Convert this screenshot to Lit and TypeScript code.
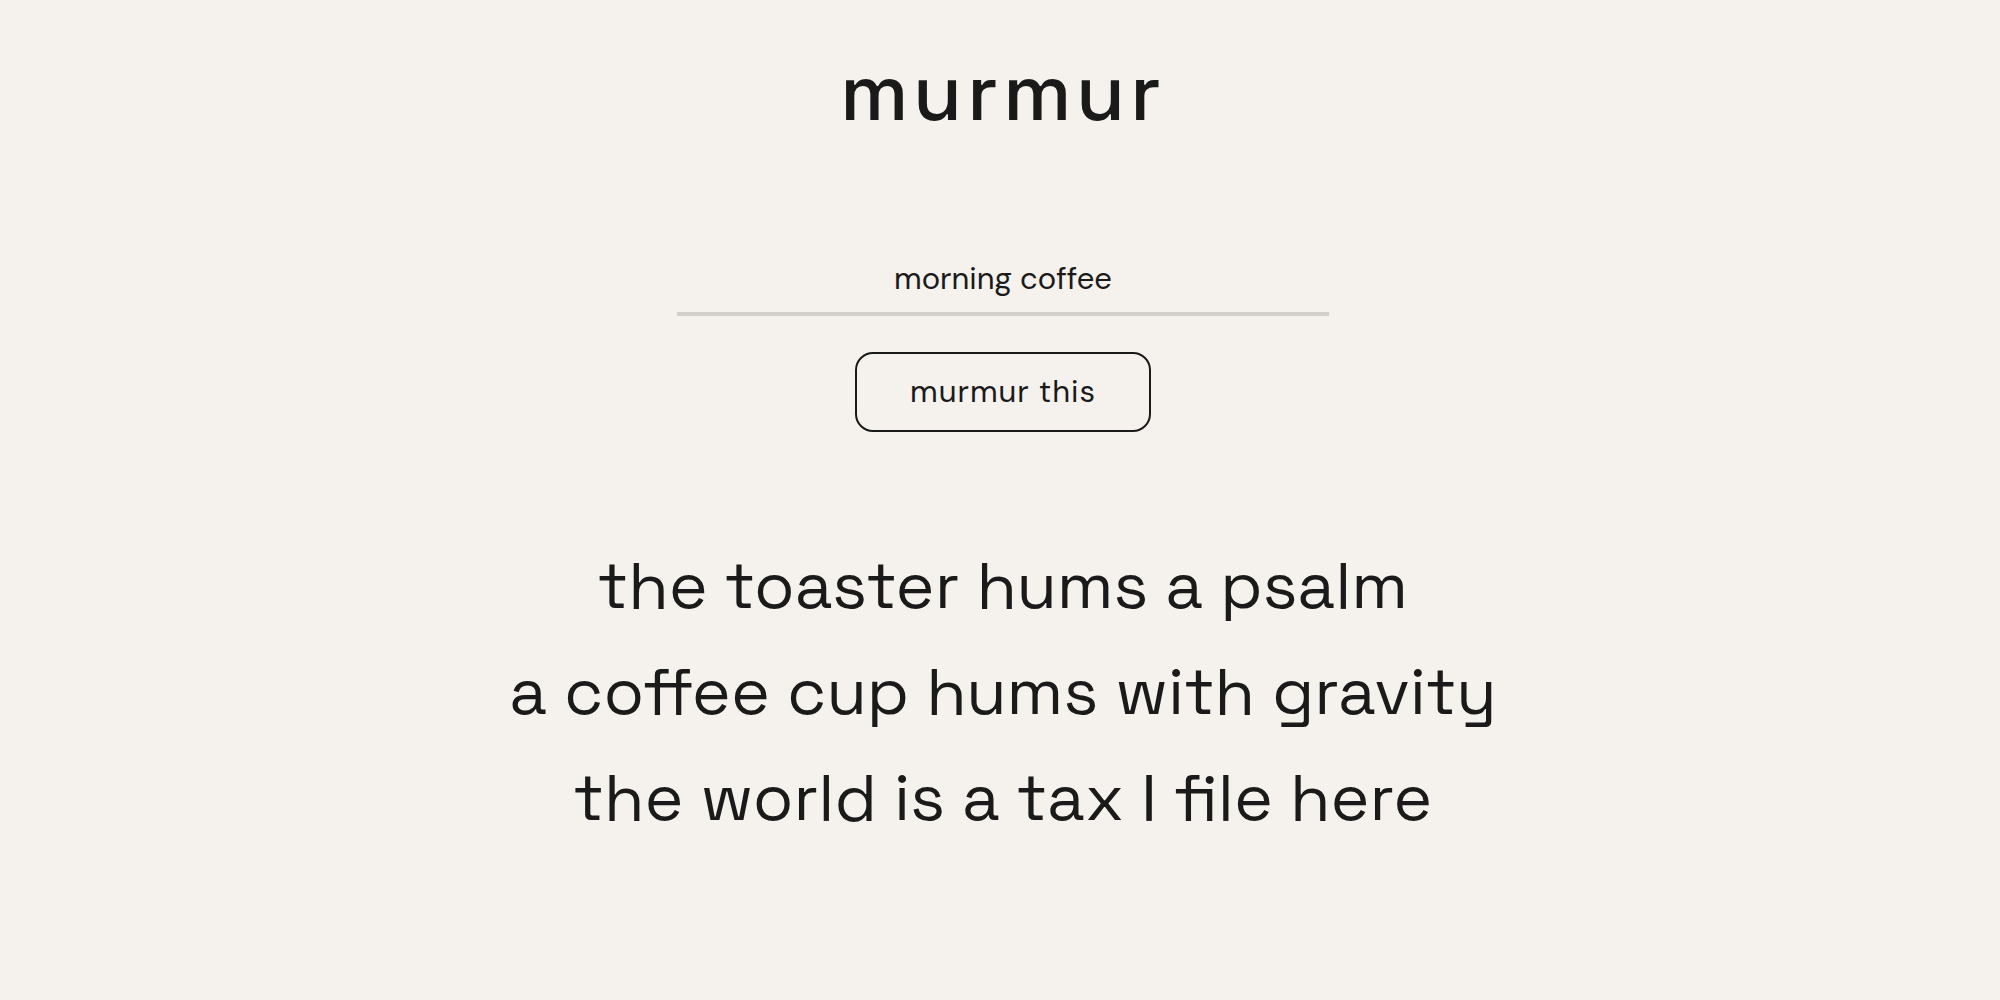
import { LitElement, html, css } from "lit";
import { customElement, state } from "lit/decorators.js";

@customElement("app-root")
export class AppRoot extends LitElement {
  static styles = css`
    :host {
      display: block;
      min-height: 100vh;
      box-sizing: border-box;
      padding: 42px 0 48px 6px;
      background: #f5f1ec;
      color: #1a1a1a;
      font-family: "DM Sans", "Open Sans", sans-serif;
    }
    .page {
      display: flex;
      flex-direction: column;
      align-items: center;
    }
    .title {
      margin: 0;
      font-family: "Space Grotesk", Inter, sans-serif;
      font-size: 80px;
      line-height: 100px;
      font-weight: 500;
      letter-spacing: 5px;
    }
    .form {
      display: flex;
      flex-direction: column;
      align-items: center;
      gap: 36px;
      width: 652px;
      max-width: 100%;
      margin-top: 110px;
    }
    .prompt {
      box-sizing: border-box;
      width: 100%;
      padding: 8px 0 14px;
      border: 0;
      border-bottom: 4px solid #d3cfca;
      border-radius: 0;
      outline: none;
      background: transparent;
      color: inherit;
      font-family: inherit;
      font-size: 31px;
      line-height: 38px;
      text-align: center;
    }
    .submit {
      padding: 20px 53px;
      border: 2px solid #1a1a1a;
      border-radius: 18px;
      background: transparent;
      color: inherit;
      font-family: inherit;
      font-size: 31px;
      line-height: 36px;
      letter-spacing: 1px;
      cursor: pointer;
    }
    .poem {
      margin-top: 100px;
      font-family: "Space Grotesk", Inter, sans-serif;
      font-size: 66px;
      line-height: 106px;
      text-align: center;
    }
    .line {
      margin: 0;
    }
  `;

  @state() private topic = "morning coffee";

  @state() private lines = [
    "the toaster hums a psalm",
    "a coffee cup hums with gravity",
    "the world is a tax I file here",
  ];

  private onInput(e: Event) {
    this.topic = (e.target as HTMLInputElement).value;
  }

  render() {
    return html`
      <main class="page">
        <h1 class="title">murmur</h1>
        <form class="form" @submit=${(e: Event) => e.preventDefault()}>
          <input
            class="prompt"
            type="text"
            aria-label="topic"
            .value=${this.topic}
            @input=${this.onInput}
          />
          <button class="submit" type="submit">murmur this</button>
        </form>
        <section class="poem">
          ${this.lines.map((line) => html`<p class="line">${line}</p>`)}
        </section>
      </main>
    `;
  }
}
